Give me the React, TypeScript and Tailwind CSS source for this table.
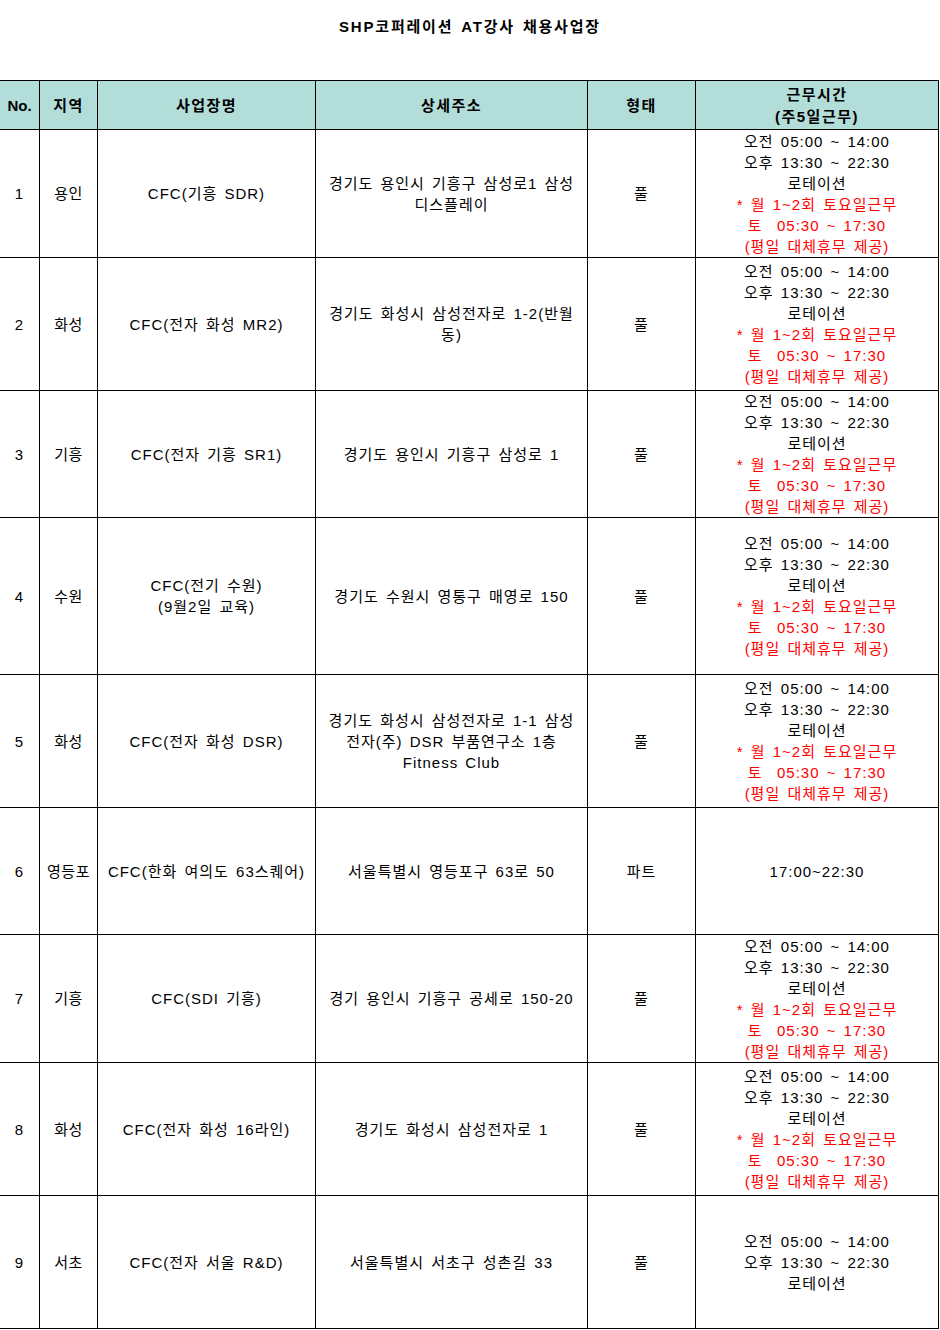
import React from "react";

type Row = {
  no: string;
  region: string;
  name: React.ReactNode;
  addr: React.ReactNode;
  type: string;
  h: string;
  time: "full" | "short" | "part";
};

const rows: Row[] = [
  { no: "1", region: "용인", name: "CFC(기흥 SDR)", addr: <>경기도 용인시 기흥구 삼성로1 삼성<br />디스플레이</>, type: "풀", h: "h-[128px]", time: "full" },
  { no: "2", region: "화성", name: "CFC(전자 화성 MR2)", addr: <>경기도 화성시 삼성전자로 1-2(반월<br />동)</>, type: "풀", h: "h-[133px]", time: "full" },
  { no: "3", region: "기흥", name: "CFC(전자 기흥 SR1)", addr: "경기도 용인시 기흥구 삼성로 1", type: "풀", h: "h-[127px]", time: "full" },
  { no: "4", region: "수원", name: <>CFC(전기 수원)<br />(9월2일 교육)</>, addr: "경기도 수원시 영통구 매영로 150", type: "풀", h: "h-[157px]", time: "full" },
  { no: "5", region: "화성", name: "CFC(전자 화성 DSR)", addr: <>경기도 화성시 삼성전자로 1-1 삼성<br />전자(주) DSR 부품연구소 1층<br />Fitness Club</>, type: "풀", h: "h-[133px]", time: "full" },
  { no: "6", region: "영등포", name: "CFC(한화 여의도 63스퀘어)", addr: "서울특별시 영등포구 63로 50", type: "파트", h: "h-[127px]", time: "part" },
  { no: "7", region: "기흥", name: "CFC(SDI 기흥)", addr: "경기 용인시 기흥구 공세로 150-20", type: "풀", h: "h-[128px]", time: "full" },
  { no: "8", region: "화성", name: "CFC(전자 화성 16라인)", addr: "경기도 화성시 삼성전자로 1", type: "풀", h: "h-[133px]", time: "full" },
  { no: "9", region: "서초", name: "CFC(전자 서울 R&D)", addr: "서울특별시 서초구 성촌길 33", type: "풀", h: "h-[133px]", time: "short" },
];

const cell = "flex items-center justify-center text-center border-r border-b border-black";

function Time({ kind }: { kind: Row["time"] }) {
  if (kind === "part") return <div>17:00~22:30</div>;
  return (
    <div className="leading-[21px]">
      <div>오전 05:00 ~ 14:00</div>
      <div>오후 13:30 ~ 22:30</div>
      <div>로테이션</div>
      {kind === "full" && (
        <div className="text-[#ff0000]">
          <div>* 월 1~2회 토요일근무</div>
          <div>토&nbsp; 05:30 ~ 17:30</div>
          <div>(평일 대체휴무 제공)</div>
        </div>
      )}
    </div>
  );
}

export default function App() {
  const cols = "grid grid-cols-[40px_58px_218px_272px_108px_243px]";
  return (
    <div
      className="w-[940px] h-[1330px] bg-white text-black text-[15px] leading-[21px]"
      style={{ fontFamily: '"Liberation Sans", "Noto Sans CJK KR", sans-serif' }}
    >
      <div className="h-[80px] pt-[16px] text-center font-bold text-[15px] tracking-[1.8px] [word-spacing:2px]">
        SHP코퍼레이션 AT강사 채용사업장
      </div>
      <div className="ml-[-1px] w-[940px] border-t border-l border-black tracking-[1px] [word-spacing:2px]">
        <div className={`${cols} h-[49px] bg-[#b2ddd9] font-bold tracking-[1.5px]`}>
          <div className={`${cell} tracking-[0px]`}>No.</div>
          <div className={cell}>지역</div>
          <div className={cell}>사업장명</div>
          <div className={cell}>상세주소</div>
          <div className={cell}>형태</div>
          <div className={`${cell} leading-[22px] pt-[1px]`}>
            근무시간
            <br />
            (주5일근무)
          </div>
        </div>
        {rows.map((r) => (
          <div key={r.no} className={`${cols} ${r.h}`}>
            <div className={cell}>{r.no}</div>
            <div className={`${cell} tracking-[0.5px]`}>{r.region}</div>
            <div className={cell}>
              <div>{r.name}</div>
            </div>
            <div className={`${cell} px-[1px]`}>
              <div>{r.addr}</div>
            </div>
            <div className={cell}>{r.type}</div>
            <div className={cell}>
              <Time kind={r.time} />
            </div>
          </div>
        ))}
      </div>
    </div>
  );
}
